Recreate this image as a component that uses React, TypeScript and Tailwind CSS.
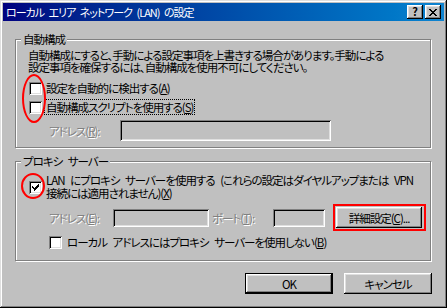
import React from "react";

const raised =
  "shadow-[inset_-1px_-1px_0_#000,inset_1px_1px_0_#fff,inset_-2px_-2px_0_#808080,inset_2px_2px_0_#dfdfdf]";
const sunken =
  "shadow-[inset_1px_1px_0_#808080,inset_-1px_-1px_0_#fff,inset_2px_2px_0_#000,inset_-2px_-2px_0_#dfdfdf]";
const disabled = "text-[#808080] [text-shadow:1px_1px_0_#fff]";

function Check({ checked }: { checked?: boolean }) {
  return (
    <div className={`relative w-[13px] h-[13px] shrink-0 bg-white ${sunken}`}>
      {checked && (
        <svg className="absolute left-0 top-0" width="13" height="13" viewBox="0 0 13 13" shapeRendering="crispEdges">
          <path
            d="M3 5h1v1h1v1h1V6h1V5h1V4h1V3h1v3h-1v1h-1v1h-1v1h-1v1h-1V9H5V8H4V7H3z"
            fill="#000"
          />
        </svg>
      )}
    </div>
  );
}

function Group({ label, className, children }: { label: string; className?: string; children: React.ReactNode }) {
  return (
    <div className={`border border-[#808080] shadow-[inset_1px_1px_0_#fff,1px_1px_0_#fff] ${className ?? ""}`}>
      <div className="-mt-[8px] ml-[5px] h-[14px] w-fit whitespace-nowrap bg-[#c0c0c0] px-[2px] leading-[14px]">{label}</div>
      {children}
    </div>
  );
}

function TitleBtn({ children, className }: { children: React.ReactNode; className?: string }) {
  return (
    <div className={`flex h-[14px] w-[16px] items-center justify-center bg-[#c0c0c0] ${raised} ${className ?? ""}`}>
      {children}
    </div>
  );
}

export default function App() {
  return (
    <div className="relative h-[308px] w-[447px] overflow-hidden bg-[#c0c0c0] p-[3px] font-['Noto_Sans_CJK_JP',sans-serif] text-[11.5px] leading-[14px] tracking-[-1px] [word-spacing:4px] text-black [font-feature-settings:'palt'] shadow-[inset_-1px_-1px_0_#000,inset_1px_1px_0_#dfdfdf,inset_-2px_-2px_0_#808080,inset_2px_2px_0_#fff]">
      {/* Title bar */}
      <div className="flex h-[18px] items-center bg-linear-to-r from-[#000080] to-[#1084d0] pl-[3px] pr-[3px]">
        <span className="flex-1 whitespace-nowrap text-[11px] text-white [word-spacing:3px]">ローカル エリア ネットワーク (LAN) の設定</span>
        <TitleBtn>
          <span className="mt-[-1px] text-[11px] font-bold leading-none tracking-normal">?</span>
        </TitleBtn>
        <TitleBtn className="ml-[2px]">
          <svg width="8" height="7" viewBox="0 0 8 7" shapeRendering="crispEdges">
            <path d="M0 0h2v1h1v1h2V1h1V0h2v1H7v1H6v1H5v1h1v1h1v1h1v1H6V6H5V5H3v1H2v1H0V6h1V5h1V4h1V3H2V2H1V1H0z" fill="#000" />
          </svg>
        </TitleBtn>
      </div>

      {/* Body */}
      <div className="pl-[12px] pr-[13px]">
        <Group label="自動構成" className="mt-[18px] h-[109px]">
          <div className="ml-[12px] mt-[3px] whitespace-nowrap leading-[12px]">
            <div className="h-[12px]">自動構成にすると、手動による設定事項を上書きする場合があります。手動による</div>
            <div className="h-[12px]">設定事項を確保するには、自動構成を使用不可にしてください。</div>
          </div>
          <div className="ml-[13px] mt-[7px] flex h-[16px] items-center">
            <Check />
            <span className="ml-[4px] whitespace-nowrap">
              設定を自動的に検出する(<u>A</u>)
            </span>
          </div>
          <div className="ml-[13px] mt-[3px] flex h-[16px] items-center">
            <Check />
            <span className="ml-[3px] whitespace-nowrap px-[1px] outline outline-1 outline-dotted outline-black">
              自動構成スクリプトを使用する(<u>S</u>)
            </span>
          </div>
          <div className="mt-[5px] flex h-[21px] items-center">
            <span className={`ml-[33px] w-[71px] whitespace-nowrap ${disabled}`}>
              アドレス(<u>R</u>):
            </span>
            <div className={`h-[21px] w-[211px] bg-[#c0c0c0] ${sunken}`} />
          </div>
        </Group>

        <Group label="プロキシ サーバー" className="mt-[13px] h-[100px]">
          <div className="ml-[13px] mt-[6px] flex items-center">
            <Check checked />
            <div className="ml-[4px] whitespace-nowrap leading-[13px]">
              <div className="h-[13px]">LAN にプロキシ サーバーを使用する (これらの設定はダイヤルアップまたは VPN</div>
              <div className="h-[13px]">
                接続には適用されません)(<u>X</u>)
              </div>
            </div>
          </div>
          <div className="mt-[7px] flex h-[21px] items-center">
            <span className={`ml-[33px] w-[64px] whitespace-nowrap ${disabled}`}>
              アドレス(<u>E</u>):
            </span>
            <div className={`h-[18px] w-[96px] bg-[#c0c0c0] ${sunken}`} />
            <span className={`w-[64px] whitespace-nowrap pl-[3px] ${disabled}`}>
              ポート(<u>T</u>):
            </span>
            <div className={`h-[18px] w-[52px] bg-[#c0c0c0] ${sunken}`} />
            <div className={`ml-[11px] flex h-[21px] w-[86px] items-center justify-center whitespace-nowrap ${raised}`}>
              詳細設定(<u>C</u>)...
            </div>
          </div>
          <div className="ml-[33px] mt-[6px] flex h-[16px] items-center">
            <Check />
            <span className="ml-[5px] whitespace-nowrap">
              ローカル アドレスにはプロキシ サーバーを使用しない(<u>B</u>)
            </span>
          </div>
        </Group>

        <div className="-mr-[1px] mt-[12px] flex justify-end">
          <div className="border border-black">
            <div className={`flex h-[19px] w-[86px] items-center justify-center ${raised}`}>OK</div>
          </div>
          <div className={`ml-[11px] flex h-[21px] w-[88px] items-center justify-center ${raised}`}>キャンセル</div>
        </div>
      </div>

      {/* Red annotations */}
      <div className="absolute left-[22px] top-[74px] h-[49px] w-[24px] rounded-[50%] border-2 border-[#f00]" />
      <div className="absolute left-[21px] top-[173px] h-[26px] w-[24px] rounded-[50%] border-2 border-[#f00]" />
      <div className="absolute left-[333px] top-[204px] h-[27px] w-[93px] border-2 border-[#f00]" />
    </div>
  );
}
